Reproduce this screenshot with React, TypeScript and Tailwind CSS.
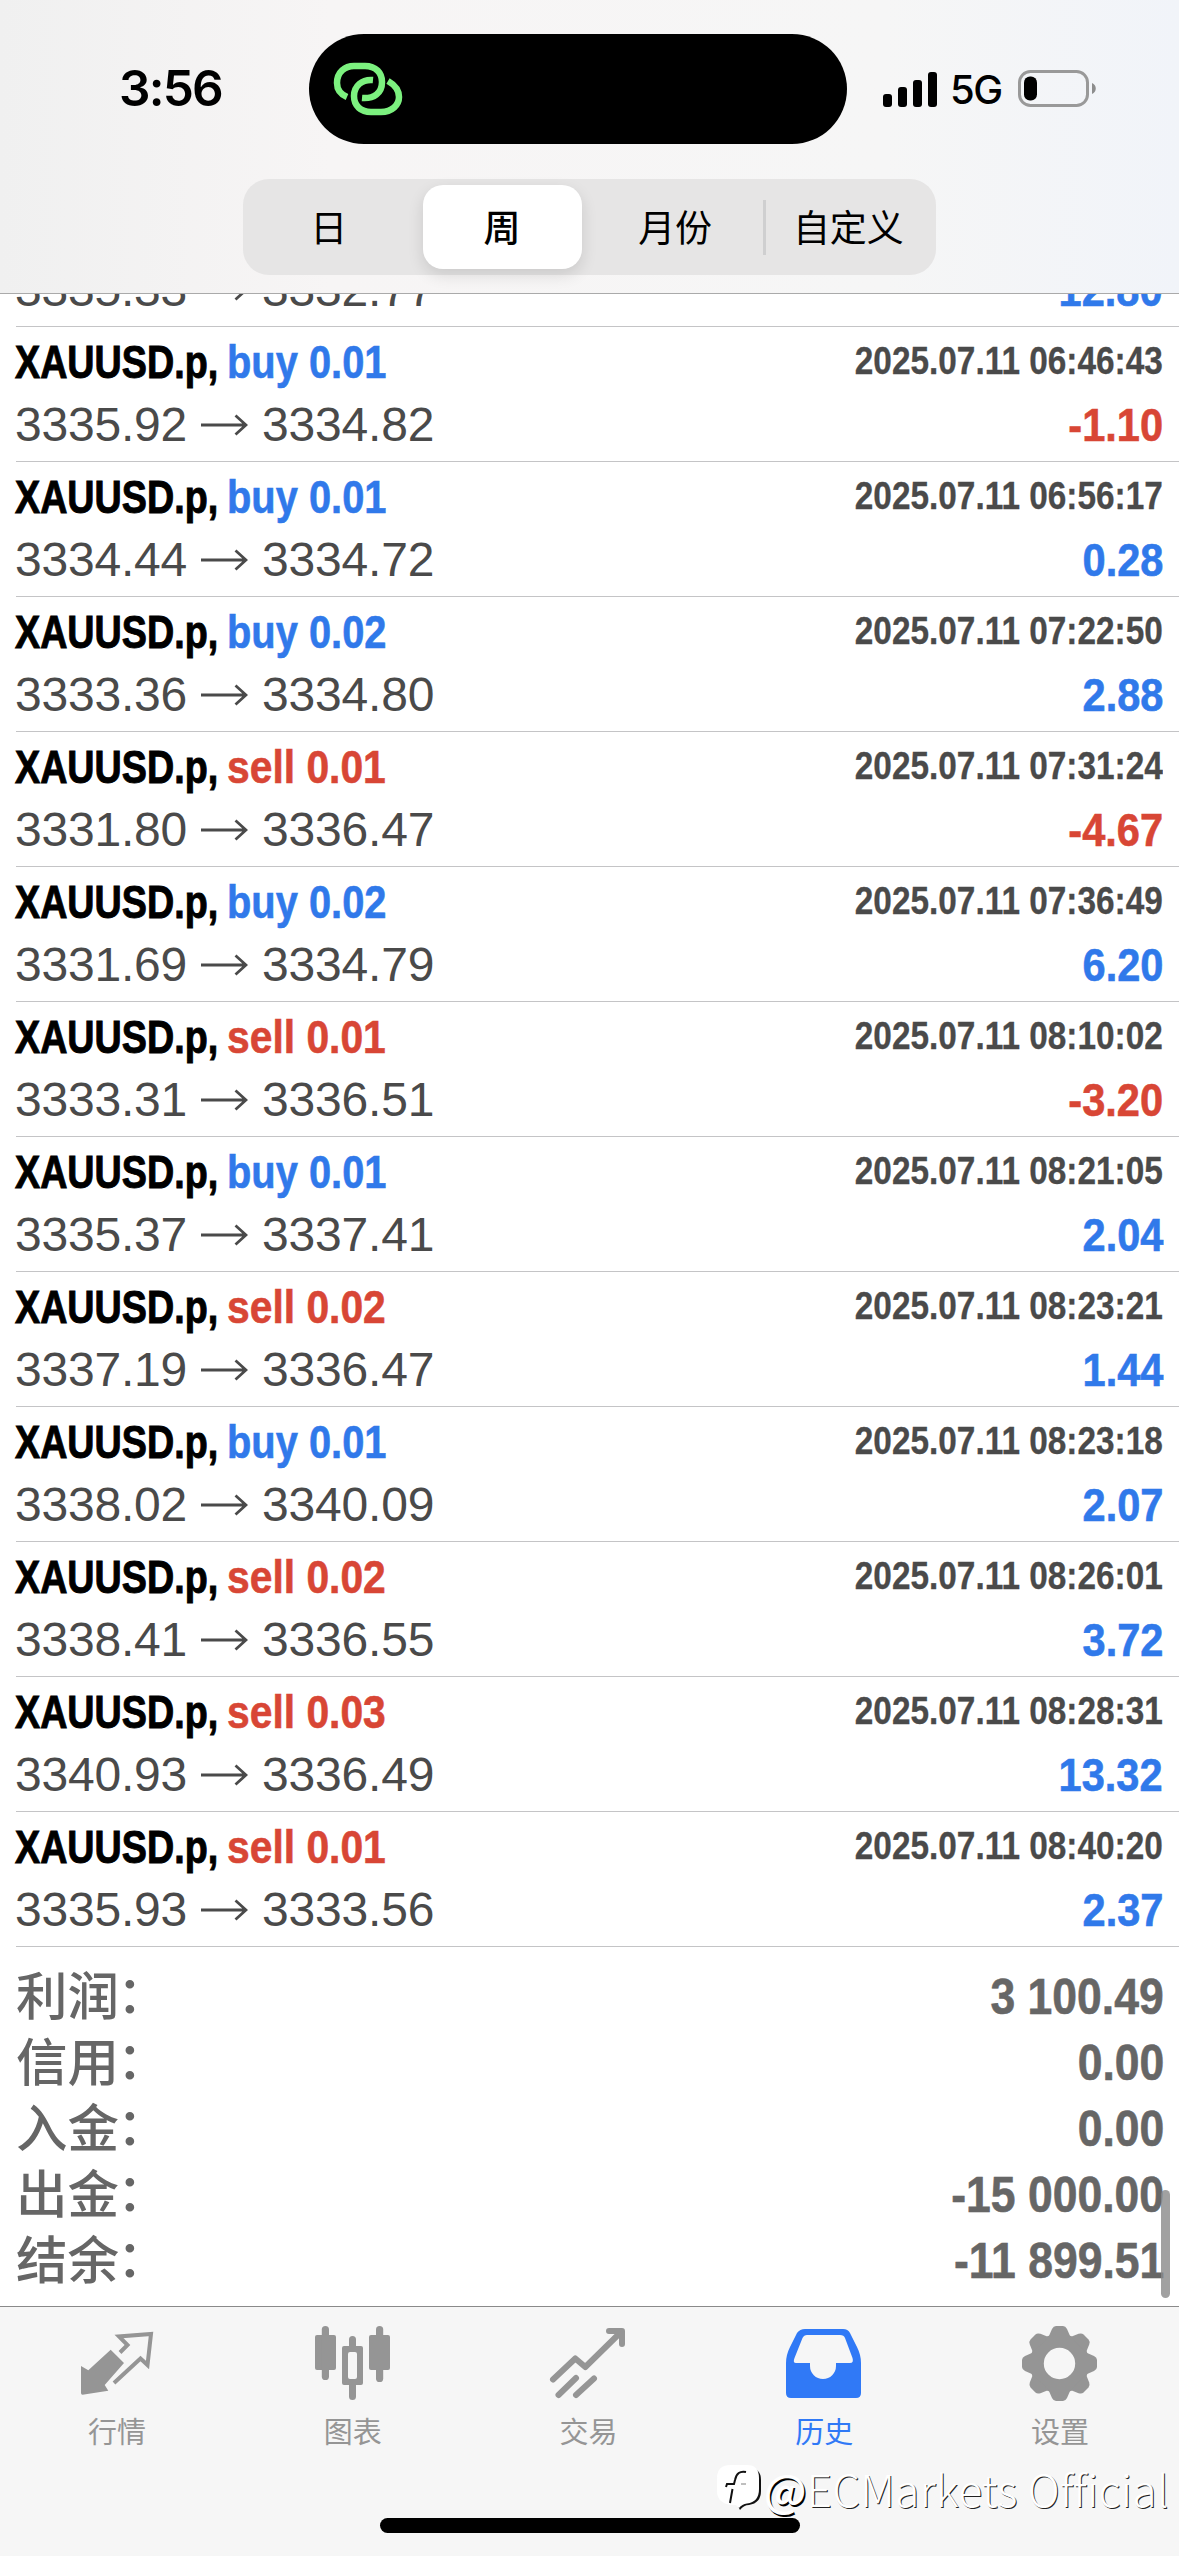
import type {ReactNode} from "react";
import {clsx} from "clsx";

type Deal = {
    side: "buy" | "sell";
    volume: string;
    open: string;
    close: string;
    time: string;
    profit: string;
};

const deals: Deal[] = [
    {side: "buy", volume: "0.01", open: "3335.92", close: "3334.82", time: "2025.07.11 06:46:43", profit: "-1.10"},
    {side: "buy", volume: "0.01", open: "3334.44", close: "3334.72", time: "2025.07.11 06:56:17", profit: "0.28"},
    {side: "buy", volume: "0.02", open: "3333.36", close: "3334.80", time: "2025.07.11 07:22:50", profit: "2.88"},
    {side: "sell", volume: "0.01", open: "3331.80", close: "3336.47", time: "2025.07.11 07:31:24", profit: "-4.67"},
    {side: "buy", volume: "0.02", open: "3331.69", close: "3334.79", time: "2025.07.11 07:36:49", profit: "6.20"},
    {side: "sell", volume: "0.01", open: "3333.31", close: "3336.51", time: "2025.07.11 08:10:02", profit: "-3.20"},
    {side: "buy", volume: "0.01", open: "3335.37", close: "3337.41", time: "2025.07.11 08:21:05", profit: "2.04"},
    {side: "sell", volume: "0.02", open: "3337.19", close: "3336.47", time: "2025.07.11 08:23:21", profit: "1.44"},
    {side: "buy", volume: "0.01", open: "3338.02", close: "3340.09", time: "2025.07.11 08:23:18", profit: "2.07"},
    {side: "sell", volume: "0.02", open: "3338.41", close: "3336.55", time: "2025.07.11 08:26:01", profit: "3.72"},
    {side: "sell", volume: "0.03", open: "3340.93", close: "3336.49", time: "2025.07.11 08:28:31", profit: "13.32"},
    {side: "sell", volume: "0.01", open: "3335.93", close: "3333.56", time: "2025.07.11 08:40:20", profit: "2.37"}
];

const totals = [
    {label: "利润", value: "3 100.49"},
    {label: "信用", value: "0.00"},
    {label: "入金", value: "0.00"},
    {label: "出金", value: "-15 000.00"},
    {label: "结余", value: "-11 899.51"}
];

const periods = ["日", "周", "月份", "自定义"];

const Arrow = () => (
    <svg className="ml-[14px] mr-[14px] h-[22px] w-[47px]" viewBox="0 0 47 22" fill="none" stroke="#4a4a4a"
         strokeWidth="2.8">
        <path d="M0 11H45M34.5 1.5L45 11L34.5 20.5"/>
    </svg>
);

const PriceLine = ({open, close, profit}: Pick<Deal, "open" | "close" | "profit">) => (
    <div className="flex h-[58px] items-center justify-between leading-[58px]">
        <div className="-ml-px flex items-center text-[48px] tracking-[-0.2px] text-[#4a4a4a]">
            <span>{open}</span>
            <Arrow/>
            <span>{close}</span>
        </div>
        <span
            className={clsx("origin-right scale-x-[0.885] text-[47px] font-bold [-webkit-text-stroke:0.6px_currentColor]", profit.startsWith("-") ? "text-[#d84635]" : "text-[#3079ea]")}>
            {profit}
        </span>
    </div>
);

const DealRow = ({side, volume, open, close, time, profit}: Deal) => (
    <div className="ml-4 h-[135px] shrink-0 border-b border-[#c4c4c6] pr-4">
        <div className="flex h-[69px] items-center justify-between font-bold leading-[69px]">
            <div className="-ml-px flex text-[47px]">
                <span
                    className="w-[212px] origin-left scale-x-[0.802] whitespace-nowrap text-black [-webkit-text-stroke:1px_black]">
                    XAUUSD.p,
                </span>
                {side === "buy" ? (
                    <span
                        className="w-[170px] origin-left scale-x-[0.848] whitespace-nowrap text-[#3079ea] [-webkit-text-stroke:0.6px_currentColor]">
                        buy {volume}
                    </span>
                ) : (
                    <span
                        className="w-[170px] origin-left scale-x-[0.868] whitespace-nowrap text-[#d84635] [-webkit-text-stroke:0.6px_currentColor]">
                        sell {volume}
                    </span>
                )}
            </div>
            <span
                className="origin-right scale-x-[0.878] whitespace-nowrap text-[38px] text-[#4a4a4a] [-webkit-text-stroke:0.3px_currentColor]">
                {time}
            </span>
        </div>
        <PriceLine open={open} close={close} profit={profit}/>
    </div>
);

const StatusBar = () => (
    <div className="flex h-[144px] items-start">
        <div
            className="w-[309px] pl-[119px] pt-[55px] font-['Inter'] text-[49.5px] font-semibold leading-[67px] tracking-[-1.8px]">
            3:56
        </div>
        <div className="mt-[34px] flex h-[110px] w-[538px] items-center rounded-full bg-black pl-[24px]">
            <svg className="h-[56px] w-[70px]" viewBox="0 0 70 56" fill="none" stroke="#7cf17f" strokeWidth="6.5">
                <path d="M14 36C7 33 4 28 4 22C4 11 12 5 21 5H32C43 5 49 12 49 21C49 32 41 38 29 37"/>
                <path d="M40 19C29 18 21 25 21 35C21 45 28 51 38 51H48C59 51 66 44 66 36C66 29 62 24 55 20"/>
            </svg>
        </div>
        <div className="flex items-center pl-[36px] pt-[69px]">
            <div className="flex h-[37px] items-end gap-[6px]">
                <i className="h-[13px] w-[9px] rounded-[3px] bg-black"/>
                <i className="h-[20px] w-[9px] rounded-[3px] bg-black"/>
                <i className="h-[27px] w-[9px] rounded-[3px] bg-black"/>
                <i className="h-[35px] w-[9px] rounded-[3px] bg-black"/>
            </div>
            <span
                className="ml-[13px] w-[68px] whitespace-nowrap pt-[2px] font-['Inter'] text-[40px] font-medium leading-[37px] tracking-[-1.5px]">
                5G
            </span>
            <svg className="h-[37px] w-[82px]" viewBox="0 0 82 37">
                <rect x="1.5" y="1.5" width="68" height="34" rx="11" fill="none" stroke="#999" strokeWidth="3"/>
                <rect x="6" y="6.5" width="13" height="24" rx="6"/>
                <path d="M74 13C79 15 79 22 74 24Z" fill="#8d8d8d"/>
            </svg>
        </div>
    </div>
);

const PeriodPicker = () => (
    <div
        className="mx-auto mt-[35px] grid h-[96px] w-[693px] grid-cols-4 rounded-[26px] bg-[#e6e5e5] text-[37px]">
        {periods.map((period, index) => (
            <div
                key={period}
                className={clsx("flex items-center justify-center", index === 3 && "relative before:absolute before:left-0 before:top-[21px] before:h-[55px] before:w-[3px] before:bg-[#cfcfd0]")}
            >
                <div
                    className={clsx("flex h-[84px] w-[159px] items-center justify-center pr-[2px] pt-[5px]", index === 1 && "rounded-[20px] bg-white font-medium shadow-[0_6px_16px_rgba(0,0,0,0.12)]")}>
                    {period}
                </div>
            </div>
        ))}
    </div>
);

const QuotesIcon = () => (
    <>
        <path d="M30.7 24.7L44 38L24.7 60L28.3 65.7L2.5 69.7Q1 69.7 1 68V41L8.3 45.3Z" fill="currentColor"/>
        <path d="M40 27.5L47.5 20L39 11.5L71 9L67.5 40L60.5 33.5L34 58" fill="none" stroke="currentColor"
              strokeWidth="4"/>
    </>
);

const ChartIcon = () => (
    <g fill="currentColor">
        <rect x="-1" y="10" width="21" height="35" rx="2"/>
        <rect x="5.8" y="1" width="7.2" height="54" rx="3.6"/>
        <path
            fillRule="evenodd"
            d="M28 21H45Q47 21 47 23V58Q47 60 45 60H28Q26 60 26 58V23Q26 21 28 21ZM34 27Q32 27 32 29V52Q32 54 34 54H39Q41 54 41 52V29Q41 27 39 27Z"
        />
        <path d="M33 22V14.5A3.5 3.5 0 0 1 40 14.5V22ZM33 59V71.5A3.5 3.5 0 0 0 40 71.5V59Z"/>
        <rect x="53" y="10" width="21" height="35" rx="2"/>
        <rect x="60" y="1" width="7.2" height="56" rx="3.6"/>
    </g>
);

const TradeIcon = () => (
    <g fill="none" stroke="currentColor" strokeWidth="6" strokeLinecap="round" strokeLinejoin="round">
        <path d="M2 54.5L24.3 33.5L34.3 42L70 7"/>
        <path d="M58 6H71V19"/>
        <path d="M7.5 70L25 53M25 70L43 53.5"/>
    </g>
);

const HistoryIcon = () => (
    <path
        fill="currentColor"
        fillRule="evenodd"
        d="M18 4H56Q61 4 63 8L70 22Q74 30 74 38V68Q74 73 69 73H4Q-1 73 -1 68V38Q-1 30 3 22L10 8Q13 4 18 4ZM20 10Q17 10 15.5 13L7.5 33Q5.5 38 9 38H23V41A13 13 0 0 0 49 41V38H63Q67 38 65.5 33L58 13Q57 10 53 10Z"
    />
);

const GearIcon = () => (
    <g fill="currentColor">
        <circle cx="36.5" cy="38.5" r="22.7" fill="none" stroke="currentColor" strokeWidth="14"/>
        {[0, 45, 90, 135, 180, 225, 270, 315].map((angle) => (
            <path
                key={angle}
                transform={`rotate(${angle} 36.5 38.5)`}
                d="M25.5 12L29 4Q30.500 1 33 1H40Q42.500 1 44 4L47.500 12Z"
            />
        ))}
    </g>
);

const tabs: { label: string; icon: ReactNode; active?: boolean }[] = [
    {label: "行情", icon: <QuotesIcon/>},
    {label: "图表", icon: <ChartIcon/>},
    {label: "交易", icon: <TradeIcon/>},
    {label: "历史", icon: <HistoryIcon/>, active: true},
    {label: "设置", icon: <GearIcon/>}
];

const TabBar = () => (
    <nav className="grid h-[211px] grid-cols-5 pt-[18px]">
        {tabs.map((tab) => (
            <div
                key={tab.label}
                className={clsx("flex flex-col items-center", tab.active ? "text-[#3079f6]" : "text-[#959595]")}
            >
                <svg className="h-[76px] w-[76px] overflow-visible" viewBox="0 0 76 76">{tab.icon}</svg>
                <span className="mr-[2px] mt-[10px] text-[29px] leading-[44px]">{tab.label}</span>
            </div>
        ))}
    </nav>
);

const Watermark = () => (
    <div className="absolute right-[10px] top-[2458px] flex h-[60px] items-center text-white">
        <svg className="h-[48px] w-[46px] overflow-visible" viewBox="0 0 46 48">
            <path d="M24 4H31Q43 4 43 16V27Q43 39 31 41Q26 41 22 46L20 42Z" fill="#111"/>
            <path d="M13 1H29Q41 1 41 14V25Q41 38 29 39.5Q24 40 21 44L18 41H13Q-1 39 -1 27V14Q-1 1 13 1Z" fill="#fff"/>
            <path d="M28 8Q19 6 17 16L16 20H9L8 23M14.500 25L12 39" fill="none" stroke="#111" strokeWidth="2"/>
            <path d="M23 20H28" stroke="#aaa" strokeWidth="1.5"/>
        </svg>
        <span
            className="whitespace-nowrap font-['Noto_Sans_CJK_SC'] text-[44px] font-light leading-[60px] tracking-[0.35px] [text-shadow:1px_1px_0_#222]">
            <span className="font-medium [text-shadow:1.5px_1.5px_0_#000]">@</span>ECMarkets Official
        </span>
    </div>
);

export default function App() {
    return (
        <div
            className="relative flex h-[2556px] w-[1179px] flex-col overflow-hidden bg-white font-['Liberation_Sans','Noto_Sans_CJK_SC',sans-serif] text-black">
            <header
                className="h-[294px] shrink-0 border-b border-[#aaa] bg-[linear-gradient(to_right,#f0f0f0,#f7f5f5_28%,#f6f6f6_75%,#f1f4f9)]">
                <StatusBar/>
                <PeriodPicker/>
            </header>

            <main className="relative h-[2012px] shrink-0 overflow-hidden">
                {/* the oldest visible deal is scrolled half under the header */}
                <div className="ml-4 flex h-[33px] flex-col justify-end border-b border-[#c4c4c6] pb-[7px] pr-4">
                    <PriceLine open="3335.33" close="3332.77" profit="12.80"/>
                </div>
                {deals.map((deal) => (
                    <DealRow key={deal.time} {...deal}/>
                ))}
                <div className="pl-4 pr-[15px] pt-[16px] font-bold text-[#666]">
                    {totals.map((total) => (
                        <div key={total.label} className="flex h-[66px] items-center justify-between leading-[66px]">
                            <div className="-mt-[6px] flex font-['Noto_Sans_CJK_SC'] text-[51.5px] font-medium">
                                <span>{total.label}</span>
                                <span className="-ml-[2px] -mt-[2px]">：</span>
                            </div>
                            <span
                                className="origin-right scale-x-[0.89] pt-px text-[50px] [-webkit-text-stroke:0.6px_currentColor]">
                                {total.value}
                            </span>
                        </div>
                    ))}
                </div>
                <div className="absolute right-[9px] top-[1896px] h-[108px] w-[9px] rounded-full bg-[#8a8a8a]/80"/>
            </main>

            <footer className="h-[250px] shrink-0 border-t border-[#8a8a8a] bg-[#f6f6f6]">
                <TabBar/>
                <div className="mx-auto h-[15px] w-[420px] rounded-full bg-black"/>
            </footer>
            <Watermark/>
        </div>
    );
}
